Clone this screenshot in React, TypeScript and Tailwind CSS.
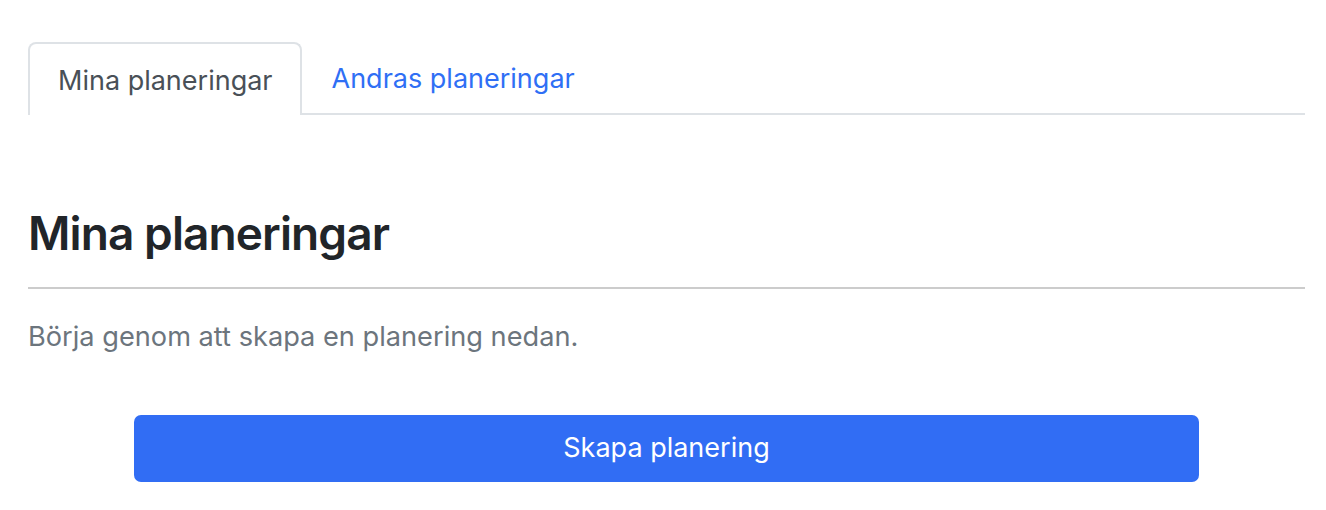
import React from "react";

export default function App() {
  return (
    <div
      className="w-[1326px] h-[510px] bg-white pl-[28px] pr-[21px] pt-[42px]"
      style={{ fontFamily: "Inter, 'Noto Sans', sans-serif" }}
    >
      <div className="flex border-b-2 border-[#dee2e6]">
        <div className="-mb-[2px] border-2 border-b-0 border-[#dee2e6] rounded-t-[8px] bg-white h-[73px] pl-[28px] pr-[27px] pt-[3px] flex items-center text-[27px] text-[#495057]">
          Mina planeringar
        </div>
        <div className="h-[71px] px-[30px] pt-[3px] flex items-center text-[27px] text-[#2f6ff5]">
          Andras planeringar
        </div>
      </div>
      <h2 className="mt-[91px] text-[46px] font-semibold text-[#212529] leading-[55px] tracking-[-0.9px]">
        Mina planeringar
      </h2>
      <hr className="mt-[26px] border-0 border-t-2 border-[#cccccc]" />
      <p className="mt-[28px] text-[27.2px] text-[#6c757d] leading-[40px]">
        Börja genom att skapa en planering nedan.
      </p>
      <div className="mt-[58px] w-10/12 mx-auto">
        <button className="w-full h-[67px] rounded-[7px] bg-[#316df4] text-white text-[27px]">
          Skapa planering
        </button>
      </div>
    </div>
  );
}
